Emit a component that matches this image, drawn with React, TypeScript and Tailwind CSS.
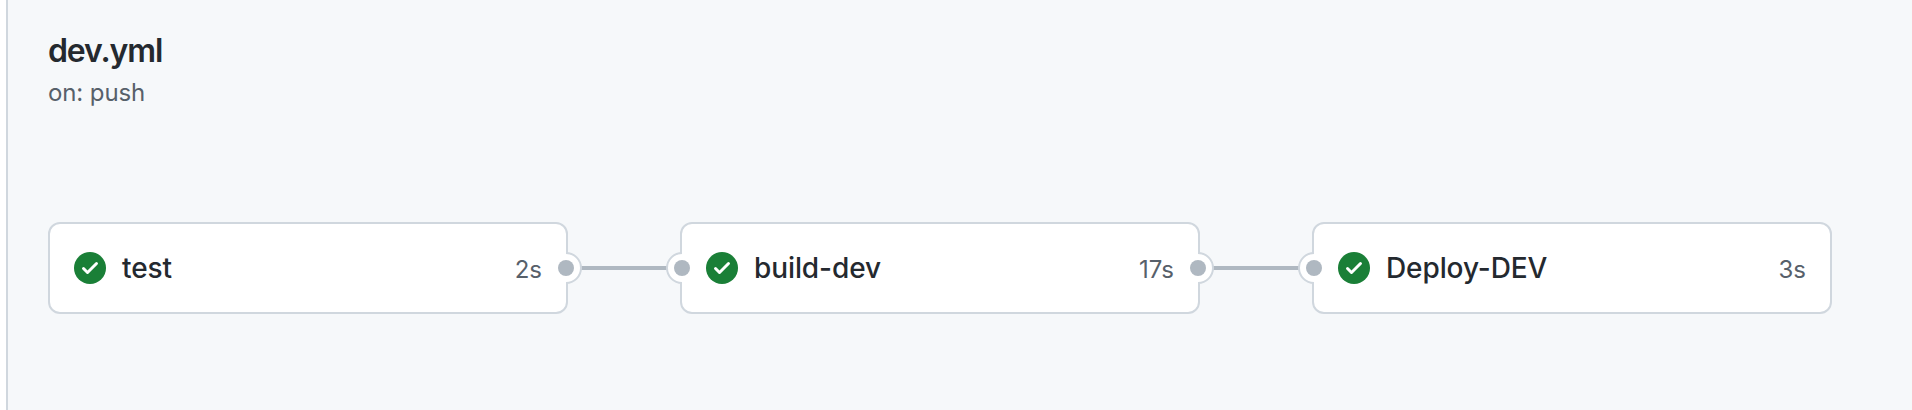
import React from "react";

type Job = { name: string; duration: string };

const jobs: Job[] = [
  { name: "test", duration: "2s" },
  { name: "build-dev", duration: "17s" },
  { name: "Deploy-DEV", duration: "3s" },
];

function SuccessIcon() {
  return (
    <svg viewBox="0 0 16 16" className="size-8 shrink-0 fill-[#1a7f37]" aria-hidden="true">
      <path d="M8 16A8 8 0 1 0 8 0a8 8 0 0 0 0 16Z" />
      <path className="fill-white" d="M11.78 6.28a.75.75 0 0 0-1.06-1.06L6.75 9.19 5.28 7.72a.75.75 0 0 0-1.06 1.06l2 2a.75.75 0 0 0 1.06 0Z" />
    </svg>
  );
}

function Port({ side }: { side: "left" | "right" }) {
  const right = side === "right";
  return (
    <>
      <span className={`absolute top-[28px] h-8 w-4 overflow-hidden ${right ? "-right-4" : "-left-4"}`}>
        <span className={`absolute top-0 size-8 rounded-full border-2 border-[#d0d7de] bg-white ${right ? "right-0" : "left-0"}`} />
      </span>
      <span className={`absolute top-[36px] size-4 rounded-full bg-[#afb8c1] ${right ? "-right-2" : "-left-2"}`} />
    </>
  );
}

function JobCard({ job, first, last }: { job: Job; first: boolean; last: boolean }) {
  return (
    <div className="relative flex h-[92px] w-[520px] shrink-0 items-center rounded-xl border-2 border-[#d0d7de] bg-white pr-6 pl-6">
      <SuccessIcon />
      <span className="ml-4 grow text-[28px] leading-10 font-medium tracking-[-0.1px] text-[#24292f]">{job.name}</span>
      <span className="pt-1 text-[24px] leading-9 text-[#57606a]">{job.duration}</span>
      {!first && <Port side="left" />}
      {!last && <Port side="right" />}
    </div>
  );
}

export default function App() {
  return (
    <div className="h-[410px] w-full bg-white pl-1.5 font-['Inter',sans-serif]">
      <main className="flex h-full flex-col border-l-2 border-[#d0d7de] bg-[#f6f8fa] pt-[31px] pl-10">
        <h1 className="text-[32px] leading-10 font-semibold tracking-[-1.1px] text-[#24292f]">dev.yml</h1>
        <p className="mt-1 text-[24px] leading-9 tracking-[-0.1px] text-[#57606a]">on: push</p>
        <div className="mt-[111px] flex items-center">
          {jobs.map((job, i) => (
            <React.Fragment key={job.name}>
              {i > 0 && <div className="h-1 w-28 shrink-0 bg-[#afb8c1]" />}
              <JobCard job={job} first={i === 0} last={i === jobs.length - 1} />
            </React.Fragment>
          ))}
        </div>
      </main>
    </div>
  );
}
